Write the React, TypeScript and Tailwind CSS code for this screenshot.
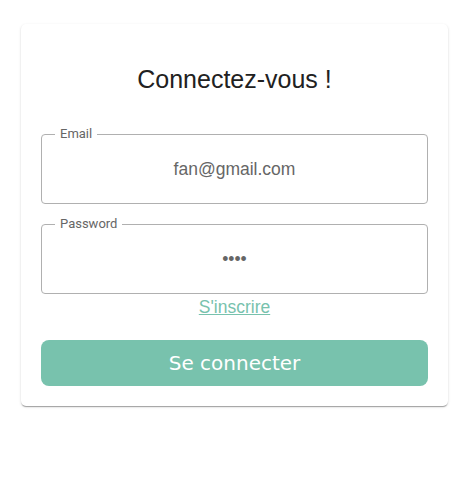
import React from "react";

function Field({ label, value, type }: { label: string; value: string; type: string }) {
  return (
    <div className="relative h-[70px] rounded-[4px] border border-[#b0b0b0] flex items-center justify-center">
      <span
        className="absolute left-[13px] top-[-9px] bg-white px-[5px] text-[13px] leading-[16px] text-[#666]"
        style={{ fontFamily: "Roboto, 'Liberation Sans', sans-serif" }}
      >
        {label}
      </span>
      <input
        readOnly
        type={type}
        value={value}
        className="w-full bg-transparent text-center text-[17.5px] text-[#666] outline-none"
        style={{ fontFamily: "'Liberation Sans', Arial, sans-serif" }}
      />
    </div>
  );
}

export default function App() {
  return (
    <div className="min-h-[499px] bg-white pt-[24px] pl-[21px]">
      <div className="w-[427px] rounded-[5px] bg-white px-[20px] pt-[40px] pb-[20px] shadow-[0_2px_1px_-1px_rgba(0,0,0,0.2),0_1px_1px_0_rgba(0,0,0,0.14),0_1px_3px_0_rgba(0,0,0,0.12)]">
        <h1
          className="text-center text-[25px] leading-[30px] text-[#212121]"
          style={{ fontFamily: "'Liberation Sans', Arial, sans-serif" }}
        >
          Connectez-vous !
        </h1>
        <div className="mt-[40px] flex flex-col gap-[20px]">
          <Field label="Email" value="fan@gmail.com" type="text" />
          <Field label="Password" value="1234" type="password" />
        </div>
        <div
          className="text-center text-[17.5px] leading-[26px]"
          style={{ fontFamily: "'Liberation Sans', Arial, sans-serif" }}
        >
          <a href="#" className="text-[#78c2ad] underline">
            S'inscrire
          </a>
        </div>
        <button
          className="mt-[20px] flex h-[46px] w-full items-center justify-center rounded-[8px] bg-[#78c2ad] text-[20px] text-white"
          style={{ fontFamily: "'DejaVu Sans', sans-serif" }}
        >
          Se connecter
        </button>
      </div>
    </div>
  );
}
